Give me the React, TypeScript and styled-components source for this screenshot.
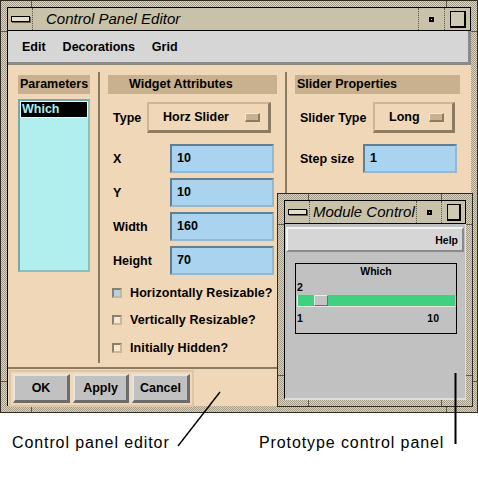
import styled, { createGlobalStyle } from "styled-components";

const uiFont = `"Liberation Sans", Arial, sans-serif`;
const plainFont = `"Liberation Sans", Arial, sans-serif`;

const GlobalStyle = createGlobalStyle`
  html, body {
    margin: 0;
    padding: 0;
    background: #ffffff;
  }
  #root {
    width: 478px;
    height: 480px;
  }
`;

// window frame: dithered khaki with the little resize-corner notches
const notch = "#5f594a";
const frameBackground = (n: number) =>
  [
    `linear-gradient(${notch}, ${notch}) left ${n}px top 0 / 1px 7px no-repeat`,
    `linear-gradient(${notch}, ${notch}) right ${n}px top 0 / 1px 7px no-repeat`,
    `linear-gradient(${notch}, ${notch}) left ${n}px bottom 0 / 1px 7px no-repeat`,
    `linear-gradient(${notch}, ${notch}) right ${n}px bottom 0 / 1px 7px no-repeat`,
    `linear-gradient(${notch}, ${notch}) left 0 top ${n}px / 7px 1px no-repeat`,
    `linear-gradient(${notch}, ${notch}) right 0 top ${n}px / 7px 1px no-repeat`,
    `linear-gradient(${notch}, ${notch}) left 0 bottom ${n}px / 7px 1px no-repeat`,
    `linear-gradient(${notch}, ${notch}) right 0 bottom ${n}px / 7px 1px no-repeat`,
    `repeating-conic-gradient(#d9d2bf 0% 25%, #a49c88 0% 50%) 0 0 / 2px 2px`,
  ].join(", ");

const Desktop = styled.div`
  position: relative;
  width: 478px;
  height: 480px;
  overflow: hidden;
  background: #ffffff;
  display: flex;
  flex-direction: column;
`;

const Window = styled.div<{ $w: number; $h: number; $notch: number }>`
  box-sizing: border-box;
  width: ${(p) => p.$w}px;
  height: ${(p) => p.$h}px;
  flex-shrink: 0;
  padding: 6px;
  border: 1px solid #2f2c25;
  background: ${(p) => frameBackground(p.$notch)};
  display: flex;
  flex-direction: column;
`;

const FloatingWindow = styled(Window)`
  position: absolute;
  left: 277px;
  top: 193px;
`;

const TitleBar = styled.div`
  box-sizing: border-box;
  height: 24px;
  flex-shrink: 0;
  display: flex;
  border: 1px solid #000;
  background: #c9c2ab;
`;

const TitleButton = styled.div<{ $w: number; $side: "left" | "right" }>`
  width: ${(p) => p.$w}px;
  flex-shrink: 0;
  display: flex;
  align-items: center;
  justify-content: center;
  border-${(p) => p.$side}: 1px dotted #5c5644;
`;

const TitleText = styled.div<{ $indent: number }>`
  flex: 1;
  min-width: 0;
  overflow: hidden;
  white-space: nowrap;
  padding-left: ${(p) => p.$indent}px;
  font: italic 15px/22px ${plainFont};
  color: #000;
`;

const MenuGlyph = styled.span`
  width: 17px;
  height: 4px;
  border: 1px solid #000;
  background: #e4ddc8;
  box-shadow: 1px 1px 0 #6b6452;
`;

const MinGlyph = styled.span`
  width: 1px;
  height: 1px;
  border: 2px solid #000;
  background: #e8e2d0;
`;

const MaxGlyph = styled.span<{ $w: number; $h: number }>`
  box-sizing: border-box;
  width: ${(p) => p.$w}px;
  height: ${(p) => p.$h}px;
  border-style: solid;
  border-color: #000;
  border-width: 1px 2px 2px 1px;
  background: #cfc8b2;
`;

const Client = styled.div<{ $bg: string }>`
  flex: 1;
  min-height: 0;
  display: flex;
  flex-direction: column;
  background: ${(p) => p.$bg};
  border-left: 1px solid #000;
`;

const MenuBar = styled.div`
  height: 31px;
  flex-shrink: 0;
  display: flex;
  align-items: center;
  gap: 17px;
  padding-left: 14px;
  background: #d6d6d6;
  border-bottom: 3px solid #8a8a8a;
  border-right: 3px solid #8a8a8a;
`;

const MenuItem = styled.span`
  font: bold 12.5px ${uiFont};
  color: #000;
`;

const Panels = styled.div`
  height: 302px;
  flex-shrink: 0;
  display: flex;
`;

const Column = styled.div<{ $w: number; $pl: number; $pr: number }>`
  box-sizing: border-box;
  width: ${(p) => p.$w}px;
  flex-shrink: 0;
  padding: 10px ${(p) => p.$pr}px 0 ${(p) => p.$pl}px;
  display: flex;
  flex-direction: column;
`;

const VRule = styled.div`
  width: 2px;
  flex-shrink: 0;
  margin: 7px 0 4px;
  background: #8b7b63;
`;

const HRule = styled.div`
  height: 2px;
  flex-shrink: 0;
  background: #8b7b63;
`;

const SectionHeader = styled.div<{ $indent: number }>`
  height: 19px;
  flex-shrink: 0;
  padding-left: ${(p) => p.$indent}px;
  background: #c9b08e;
  font: bold 12.5px/19px ${uiFont};
  color: #000;
  white-space: nowrap;
`;

const ParamList = styled.div`
  box-sizing: border-box;
  height: 173px;
  margin-top: 5px;
  padding: 1px;
  background: #b1eeee;
  border: 2px solid;
  border-color: #7ba6a6 #8fbcbc #8fbcbc #7ba6a6;
`;

const ParamItem = styled.div<{ $selected?: boolean }>`
  height: 15px;
  padding-left: 1px;
  font: bold 12.5px/15px ${uiFont};
  background: ${(p) => (p.$selected ? "#000" : "transparent")};
  color: ${(p) => (p.$selected ? "#b1eeee" : "#000")};
  outline: ${(p) => (p.$selected ? "1px solid #e2ffff" : "none")};
`;

const FormRow = styled.div<{ $top: number }>`
  display: flex;
  align-items: center;
  margin-top: ${(p) => p.$top}px;
  padding-left: 5px;
`;

const FieldLabel = styled.span<{ $w: number }>`
  width: ${(p) => p.$w}px;
  flex-shrink: 0;
  font: bold 12.5px ${uiFont};
  color: #000;
  white-space: nowrap;
`;

const TextField = styled.div<{ $w: number }>`
  box-sizing: border-box;
  width: ${(p) => p.$w}px;
  height: 29px;
  padding-left: 5px;
  background: #a9d3ee;
  border: 2px solid;
  border-color: #5f7f95 #93b8d0 #93b8d0 #5f7f95;
  font: bold 12.5px/25px ${uiFont};
  color: #000;
`;

const OptionMenu = styled.div<{ $w: number }>`
  box-sizing: border-box;
  width: ${(p) => p.$w}px;
  height: 31px;
  display: flex;
  align-items: center;
  justify-content: space-between;
  padding: 0 8px 0 14px;
  border-style: solid;
  border-width: 2px 3px 3px 2px;
  border-color: #cdb694 #8b7b63 #8b7b63 #cdb694;
  font: bold 12.5px ${uiFont};
  color: #000;
  white-space: nowrap;
`;

const OptionMark = styled.span`
  box-sizing: border-box;
  width: 15px;
  height: 9px;
  flex-shrink: 0;
  background: #c9b08e;
  border-style: solid;
  border-width: 1px 2px 2px 1px;
  border-color: #f4e6cf #8b7b63 #8b7b63 #f4e6cf;
`;

const CheckRow = styled.div<{ $top: number }>`
  display: flex;
  align-items: center;
  height: 14px;
  margin-top: ${(p) => p.$top}px;
  padding-left: 4px;
  font: bold 12.5px ${uiFont};
  letter-spacing: 0.1px;
  color: #000;
  white-space: nowrap;
`;

const CheckBox = styled.span<{ $on?: boolean }>`
  box-sizing: border-box;
  width: 10px;
  height: 10px;
  margin-right: 8px;
  flex-shrink: 0;
  border: 2px solid;
  border-color: #8c7e6c #c9b79d #c9b79d #8c7e6c;
  background: ${(p) => (p.$on ? "#a9d3ee" : "#f6e7d0")};
`;

const ActionArea = styled.div`
  flex: 1;
  display: flex;
  align-items: flex-start;
  padding-left: 1px;
`;

const ButtonGroup = styled.div`
  display: flex;
  gap: 3px;
  margin-top: 1px;
  padding: 2px;
  border: 2px solid #dcc6a6;
`;

const PushButton = styled.div<{ $w: number }>`
  box-sizing: border-box;
  width: ${(p) => p.$w}px;
  height: 29px;
  display: flex;
  align-items: center;
  justify-content: center;
  background: #c1c1c1;
  border-style: solid;
  border-width: 2px 3px 3px 2px;
  border-color: #e4e4e4 #6c6c6c #6c6c6c #e4e4e4;
  font: bold 12.5px ${uiFont};
  color: #000;
`;

// prototype panel parts
const ModuleClient = styled(Client)`
  border-right: 1px solid #dedede;
  border-bottom: 2px solid #dedede;
`;

const HelpBar = styled.div`
  box-sizing: border-box;
  height: 25px;
  flex-shrink: 0;
  margin: 3px 1px 0 1px;
  padding-right: 4px;
  display: flex;
  align-items: center;
  justify-content: flex-end;
  background: #d6d6d6;
  border: 2px solid;
  border-color: #f2f2f2 #8a8a8a #8a8a8a #f2f2f2;
  font: bold 10.5px ${uiFont};
  color: #000;
`;

const SliderBox = styled.div`
  box-sizing: border-box;
  width: 162px;
  height: 71px;
  margin: 11px 0 0 10px;
  border: 1px solid #000;
  display: flex;
  flex-direction: column;
`;

const SliderCaption = styled.div`
  height: 14px;
  text-align: center;
  font: bold 10.5px/14px ${uiFont};
  color: #000;
`;

const SliderValue = styled.div<{ $top: number }>`
  display: flex;
  justify-content: space-between;
  margin-top: ${(p) => p.$top}px;
  padding: 0 17px 0 1px;
  font: bold 10.5px/12px ${uiFont};
  color: #000;
`;

const Trough = styled.div`
  box-sizing: border-box;
  height: 12px;
  margin: 2px 1px 0;
  display: flex;
  background: #41cf80;
  border-left: 1px solid #e6e6e6;
  border-bottom: 1px solid #e6e6e6;
`;

const Thumb = styled.div<{ $offset: number }>`
  box-sizing: border-box;
  width: 14px;
  margin-left: ${(p) => p.$offset}px;
  background: #c4c4c4;
  border: 1px solid;
  border-color: #ececec #6e6e6e #6e6e6e #ececec;
`;

const Captions = styled.div`
  display: grid;
  grid-template-columns: 247px auto;
  padding: 21px 0 0 12px;
  font: 16px/18px ${plainFont};
  letter-spacing: 0.9px;
  color: #000;
`;

const Callouts = styled.svg`
  position: absolute;
  left: 0;
  top: 0;
  width: 478px;
  height: 480px;
  pointer-events: none;
`;

export default function App() {
  return (
    <Desktop>
      <GlobalStyle />

      <Window $w={478} $h={413} $notch={30}>
        <TitleBar>
          <TitleButton $w={24} $side="right">
            <MenuGlyph />
          </TitleButton>
          <TitleText $indent={13}>Control Panel Editor</TitleText>
          <TitleButton $w={25} $side="left">
            <MinGlyph />
          </TitleButton>
          <TitleButton $w={25} $side="left">
            <MaxGlyph $w={16} $h={17} />
          </TitleButton>
        </TitleBar>

        <Client $bg="#f0d7b8">
          <MenuBar>
            <MenuItem>Edit</MenuItem>
            <MenuItem>Decorations</MenuItem>
            <MenuItem>Grid</MenuItem>
          </MenuBar>

          <Panels>
            <Column $w={90} $pl={10} $pr={8}>
              <SectionHeader $indent={2}>Parameters</SectionHeader>
              <ParamList>
                <ParamItem $selected>Which</ParamItem>
              </ParamList>
            </Column>
            <VRule />

            <Column $w={185} $pl={8} $pr={8}>
              <SectionHeader $indent={21}>Widget Attributes</SectionHeader>
              <FormRow $top={8}>
                <FieldLabel $w={34}>Type</FieldLabel>
                <OptionMenu $w={124}>
                  Horz Slider
                  <OptionMark />
                </OptionMenu>
              </FormRow>
              <FormRow $top={11}>
                <FieldLabel $w={57}>X</FieldLabel>
                <TextField $w={104}>10</TextField>
              </FormRow>
              <FormRow $top={5}>
                <FieldLabel $w={57}>Y</FieldLabel>
                <TextField $w={104}>10</TextField>
              </FormRow>
              <FormRow $top={5}>
                <FieldLabel $w={57}>Width</FieldLabel>
                <TextField $w={104}>160</TextField>
              </FormRow>
              <FormRow $top={5}>
                <FieldLabel $w={57}>Height</FieldLabel>
                <TextField $w={104}>70</TextField>
              </FormRow>
              <CheckRow $top={11}>
                <CheckBox $on />
                Horizontally Resizable?
              </CheckRow>
              <CheckRow $top={13}>
                <CheckBox />
                Vertically Resizable?
              </CheckRow>
              <CheckRow $top={14}>
                <CheckBox />
                Initially Hidden?
              </CheckRow>
            </Column>
            <VRule />

            <Column $w={184} $pl={8} $pr={11}>
              <SectionHeader $indent={2}>Slider Properties</SectionHeader>
              <FormRow $top={8}>
                <FieldLabel $w={73}>Slider Type</FieldLabel>
                <OptionMenu $w={82}>
                  Long
                  <OptionMark />
                </OptionMenu>
              </FormRow>
              <FormRow $top={11}>
                <FieldLabel $w={63}>Step size</FieldLabel>
                <TextField $w={94}>1</TextField>
              </FormRow>
            </Column>
          </Panels>

          <HRule />

          <ActionArea>
            <ButtonGroup>
              <PushButton $w={57}>OK</PushButton>
              <PushButton $w={56}>Apply</PushButton>
              <PushButton $w={58}>Cancel</PushButton>
            </ButtonGroup>
          </ActionArea>
        </Client>
      </Window>

      <FloatingWindow $w={196} $h={214} $notch={30}>
        <TitleBar>
          <TitleButton $w={24} $side="right">
            <MenuGlyph />
          </TitleButton>
          <TitleText $indent={3}>Module Control Panel</TitleText>
          <TitleButton $w={24} $side="left">
            <MinGlyph />
          </TitleButton>
          <TitleButton $w={23} $side="left">
            <MaxGlyph $w={14} $h={17} />
          </TitleButton>
        </TitleBar>
        <ModuleClient $bg="#c1c1c1">
          <HelpBar>Help</HelpBar>
          <SliderBox>
            <SliderCaption>Which</SliderCaption>
            <SliderValue $top={3}>
              <span>2</span>
            </SliderValue>
            <Trough>
              <Thumb $offset={16} />
            </Trough>
            <SliderValue $top={5}>
              <span>1</span>
              <span>10</span>
            </SliderValue>
          </SliderBox>
        </ModuleClient>
      </FloatingWindow>

      <Captions>
        <span>Control panel editor</span>
        <span>Prototype control panel</span>
      </Captions>

      <Callouts viewBox="0 0 478 480">
        <line x1="178" y1="446" x2="220" y2="392" stroke="#000" strokeWidth="1.4" />
        <line x1="455.5" y1="373" x2="455.5" y2="444" stroke="#000" strokeWidth="2" />
      </Callouts>
    </Desktop>
  );
}
